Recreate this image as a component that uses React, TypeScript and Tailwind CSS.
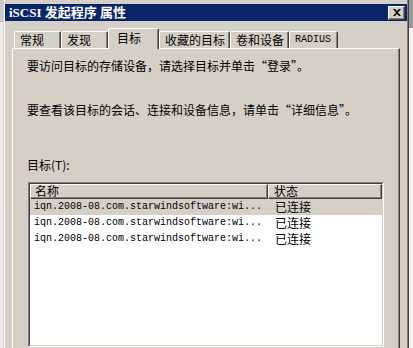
import React from "react";

const cjk = { fontFamily: '"Noto Sans CJK SC", "Liberation Sans", sans-serif' };
const mono = { fontFamily: '"Liberation Mono", "Noto Sans CJK SC", monospace' };

const tabs = [
  { label: "常规", w: "w-[47px]" },
  { label: "发现", w: "w-[47px]" },
  { label: "目标", w: "w-[51px]", active: true },
  { label: "收藏的目标", w: "w-[71px]" },
  { label: "卷和设备", w: "w-[59px]" },
  { label: "RADIUS", w: "w-[49px]", latin: true },
];

const targets = [
  { name: "iqn.2008-08.com.starwindsoftware:wi...", state: "已连接", selected: true },
  { name: "iqn.2008-08.com.starwindsoftware:wi...", state: "已连接" },
  { name: "iqn.2008-08.com.starwindsoftware:wi...", state: "已连接" },
];

export default function App() {
  return (
    <div className="w-[413px] h-[348px] overflow-hidden flex bg-[#d4d0c8] text-black" style={cjk}>
      {/* 左侧背景窗口 */}
      <div className="w-[3px] flex flex-col">
        <div className="h-[22px] bg-[#c8c8c8]" />
        <div className="flex-1 bg-[#ececec]" />
      </div>

      {/* 属性窗口 */}
      <div className="w-[406px] pl-px border-r border-[#404040] flex flex-col">
        <div className="flex-1 flex flex-col border-l border-white border-r border-r-[#808080] pt-[4px]">
          {/* 标题栏 */}
          <div className="h-[17px] bg-[#0a246a] flex items-center justify-between pl-[4px] pr-[2px]">
            <span
              className="text-white text-[13px] font-bold leading-none"
              style={{ fontFamily: '"Liberation Serif", "Noto Sans CJK SC", serif' }}
            >
              iSCSI 发起程序 属性
            </span>
            <button className="w-[17px] h-[14px] bg-[#d4d0c8] border-t border-l border-white border-r border-b border-r-[#404040] border-b-[#404040] shadow-[inset_-1px_-1px_#808080] flex items-center justify-center">
              <svg width="8" height="7" viewBox="0 0 8 7">
                <path d="M0 0h2l2 2 2-2h2L5 3.5 8 7H6L4 5 2 7H0l3-3.5z" fill="#000" />
              </svg>
            </button>
          </div>

          {/* 选项卡 */}
          <div className="h-[27px] flex items-end pl-[9px] relative z-10">
            {tabs.map((t) =>
              t.active ? (
                <div
                  key={t.label}
                  className={`${t.w} h-[21px] -mb-px bg-[#d4d0c8] border-l border-t border-white border-r border-r-[#404040] shadow-[inset_-1px_0_#808080] rounded-tl-[2px] rounded-tr-[2px] pl-[8px] pt-[1px] text-[12px] leading-[16px]`}
                >
                  {t.label}
                </div>
              ) : (
                <div
                  key={t.label}
                  className={`${t.w} h-[17px] bg-[#d4d0c8] border-l border-t border-white border-r border-r-[#404040] shadow-[inset_-1px_0_#808080] rounded-tl-[2px] rounded-tr-[2px] pl-[5px] text-[12px] leading-[16px]`}
                  style={t.latin ? { fontFamily: '"Liberation Mono", monospace', fontSize: "10px" } : undefined}
                >
                  {t.label}
                </div>
              )
            )}
          </div>

          {/* 选项卡内容 */}
          <div className="ml-[7px] w-[388px] h-[310px] border-t border-l border-white border-r border-r-[#404040] shadow-[inset_-1px_0_#808080] pl-[14px] pt-[9px] flex flex-col">
            <p className="text-[12px] leading-[16px]">要访问目标的存储设备，请选择目标并单击“登录”。</p>
            <p className="text-[12px] leading-[16px] mt-[28px]">要查看该目标的会话、连接和设备信息，请单击“详细信息”。</p>
            <p className="text-[12px] leading-[16px] mt-[39px]">目标(T):</p>

            {/* 目标列表 */}
            <div className="mt-[9px] ml-px w-[356px] h-[165px] border-t border-l border-[#808080] border-r border-b border-r-white border-b-white">
              <div className="h-full bg-white border-t border-l border-[#404040] border-r border-b border-r-[#d4d0c8] border-b-[#d4d0c8]">
                <div className="flex h-[15px] bg-[#d4d0c8]">
                  <div className="w-[238px] border-t border-l border-white border-r border-b border-r-[#404040] border-b-[#404040] shadow-[inset_-1px_-1px_#808080] pl-[4px] text-[12px] leading-[12px]">
                    名称
                  </div>
                  <div className="flex-1 border-t border-l border-white border-r border-b border-r-[#404040] border-b-[#404040] shadow-[inset_-1px_-1px_#808080] pl-[5px] text-[12px] leading-[12px]">
                    状态
                  </div>
                </div>
                {targets.map((r, i) => (
                  <div key={i} className={`flex h-[16px] items-center ${r.selected ? "bg-[#d4d0c8]" : "bg-white"}`}>
                    <span className="w-[239px] pl-[4px] text-[10px] leading-none whitespace-nowrap" style={mono}>
                      {r.name}
                    </span>
                    <span className="pl-[6px] text-[12px] leading-none">{r.state}</span>
                  </div>
                ))}
              </div>
            </div>
          </div>
        </div>
      </div>

      {/* 右侧背景窗口 */}
      <div className="w-[4px] flex flex-col">
        <div className="h-[28px] bg-[#9a9a9a]" />
        <div className="flex-1 bg-[#f4f4f4]" />
      </div>
    </div>
  );
}
